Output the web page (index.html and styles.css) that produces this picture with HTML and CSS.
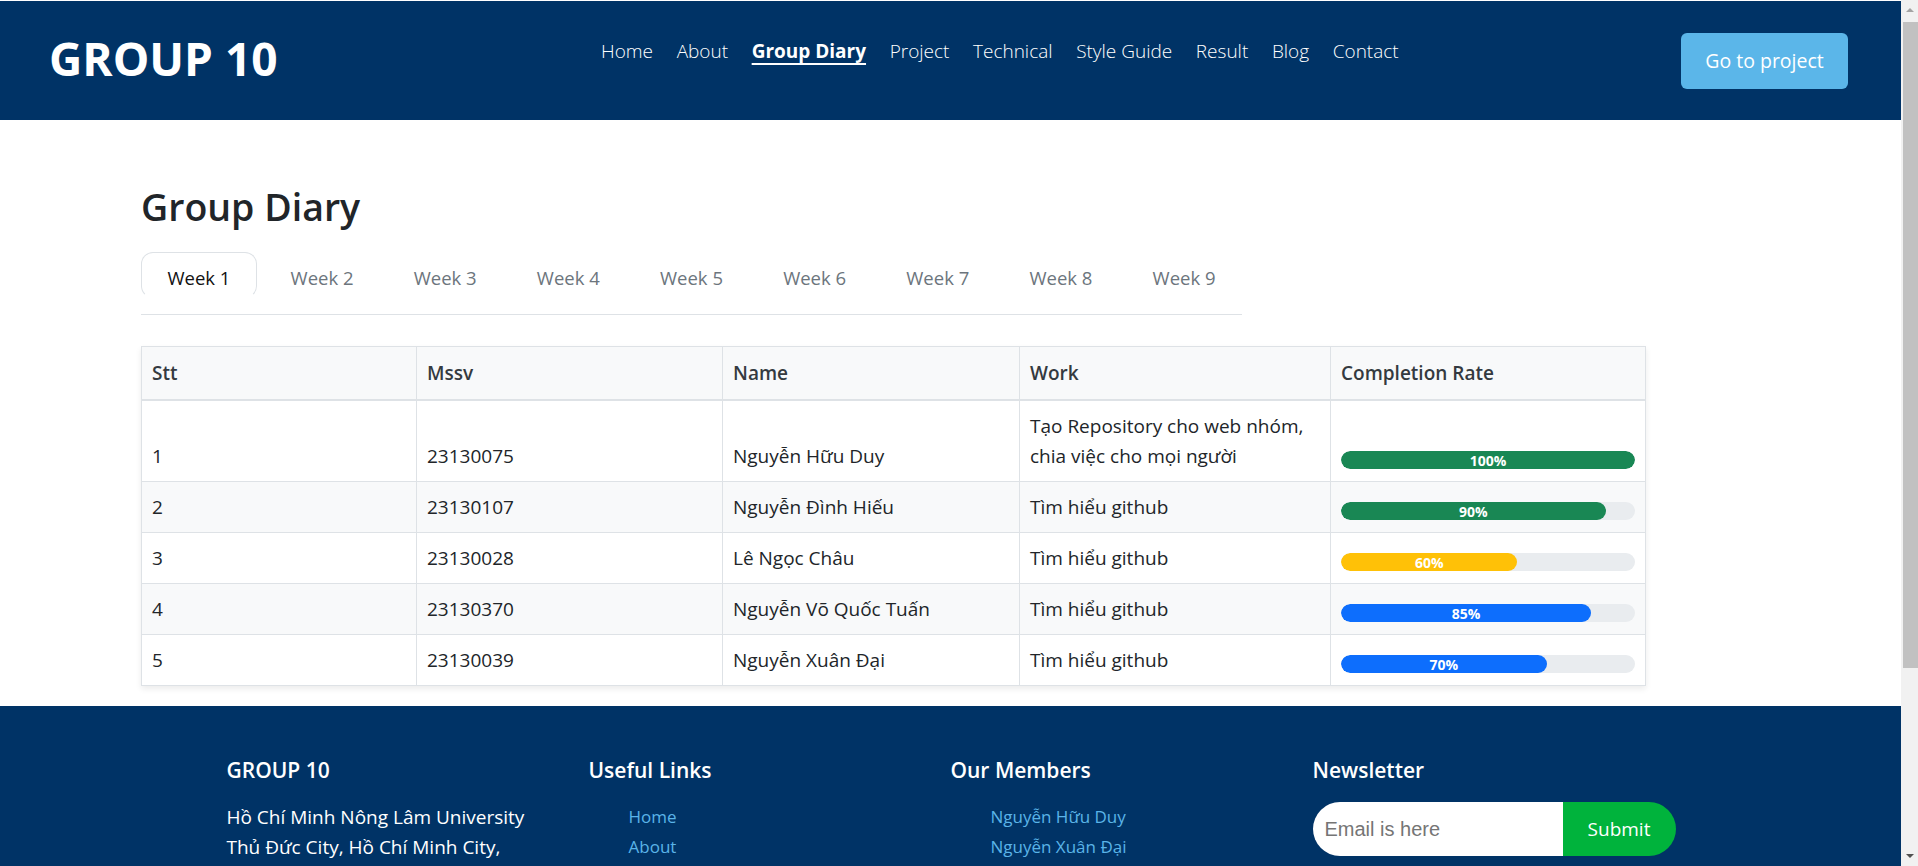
FILE: index.html
```html
<!DOCTYPE html>
<html lang="vi">
<head>
<meta charset="utf-8">
<title>Group Diary - GROUP 10</title>
<link rel="stylesheet" href="styles.css">
</head>
<body>
<header class="site-header">
  <a class="brand" href="#">GROUP 10</a>
  <nav class="main-nav">
    <a href="#">Home</a>
    <a href="#">About</a>
    <a href="#" class="active">Group Diary</a>
    <a href="#">Project</a>
    <a href="#">Technical</a>
    <a href="#">Style Guide</a>
    <a href="#">Result</a>
    <a href="#">Blog</a>
    <a href="#">Contact</a>
  </nav>
  <a class="cta" href="#">Go to project</a>
</header>

<main class="diary">
  <h1 class="diary-title">Group Diary</h1>
  <div class="tabs">
    <a class="tab active" href="#">Week 1</a>
    <a class="tab" href="#">Week 2</a>
    <a class="tab" href="#">Week 3</a>
    <a class="tab" href="#">Week 4</a>
    <a class="tab" href="#">Week 5</a>
    <a class="tab" href="#">Week 6</a>
    <a class="tab" href="#">Week 7</a>
    <a class="tab" href="#">Week 8</a>
    <a class="tab" href="#">Week 9</a>
  </div>

  <table class="diary-table">
    <colgroup>
      <col class="c-stt"><col class="c-mssv"><col class="c-name"><col class="c-work"><col class="c-rate">
    </colgroup>
    <thead>
      <tr><th>Stt</th><th>Mssv</th><th>Name</th><th>Work</th><th>Completion Rate</th></tr>
    </thead>
    <tbody>
      <tr>
        <td>1</td><td>23130075</td><td>Nguyễn Hữu Duy</td>
        <td>Tạo Repository cho web nhóm, chia việc cho mọi người</td>
        <td><div class="progress"><div class="bar bar-green" style="width:100%">100%</div></div></td>
      </tr>
      <tr>
        <td>2</td><td>23130107</td><td>Nguyễn Đình Hiếu</td>
        <td>Tìm hiểu github</td>
        <td><div class="progress"><div class="bar bar-green" style="width:90%">90%</div></div></td>
      </tr>
      <tr>
        <td>3</td><td>23130028</td><td>Lê Ngọc Châu</td>
        <td>Tìm hiểu github</td>
        <td><div class="progress"><div class="bar bar-yellow" style="width:60%">60%</div></div></td>
      </tr>
      <tr>
        <td>4</td><td>23130370</td><td>Nguyễn Võ Quốc Tuấn</td>
        <td>Tìm hiểu github</td>
        <td><div class="progress"><div class="bar bar-blue" style="width:85%">85%</div></div></td>
      </tr>
      <tr>
        <td>5</td><td>23130039</td><td>Nguyễn Xuân Đại</td>
        <td>Tìm hiểu github</td>
        <td><div class="progress"><div class="bar bar-blue" style="width:70%">70%</div></div></td>
      </tr>
    </tbody>
  </table>
</main>

<footer class="site-footer">
  <div class="footer-grid">
    <div class="f-col">
      <h3>GROUP 10</h3>
      <p>Hồ Chí Minh Nông Lâm University<br>Thủ Đức City, Hồ Chí Minh City,<br>Việt Nam</p>
      <p class="f-contact">Phone: +84 123 456 789<br>Email: group10@st.hcmuaf.edu.vn</p>
    </div>
    <div class="f-col">
      <h3>Useful Links</h3>
      <ul>
        <li><a href="#">Home</a></li>
        <li><a href="#">About</a></li>
        <li><a href="#">Group Diary</a></li>
        <li><a href="#">Project</a></li>
        <li><a href="#">Technical</a></li>
      </ul>
    </div>
    <div class="f-col">
      <h3>Our Members</h3>
      <ul>
        <li><a href="#">Nguyễn Hữu Duy</a></li>
        <li><a href="#">Nguyễn Xuân Đại</a></li>
        <li><a href="#">Nguyễn Đình Hiếu</a></li>
        <li><a href="#">Lê Ngọc Châu</a></li>
        <li><a href="#">Nguyễn Võ Quốc Tuấn</a></li>
      </ul>
    </div>
    <div class="f-col">
      <h3>Newsletter</h3>
      <form class="subscribe">
        <input type="email" placeholder="Email is here">
        <button type="button">Submit</button>
      </form>
    </div>
  </div>
  <div class="copyright">© Copyright GROUP 10. All Rights Reserved</div>
</footer>

<div class="scrollbar" aria-hidden="true">
  <div class="sb-btn"><span class="sb-up"></span></div>
  <div class="sb-thumb"></div>
  <div class="sb-track"></div>
  <div class="sb-btn"><span class="sb-down"></span></div>
</div>
</body>
</html>
```

FILE: styles.css
```css
* { box-sizing: border-box; }

html, body {
  margin: 0;
  padding: 0;
}

body {
  margin-right: 17px;
  font-family: "Open Sans", "Noto Sans", sans-serif;
  font-size: 19px;
  line-height: 30px;
  color: #212529;
  background: #fff;
}

a { text-decoration: none; }

/* ---------- Header ---------- */
.site-header {
  display: flex;
  align-items: center;
  height: 119px;
  margin-top: 1px;
  padding: 0 53px 0 49px;
  background: #003366;
}

.brand {
  flex: 0 0 552px;
  color: #fff;
  font-size: 46px;
  font-weight: 700;
  line-height: 56px;
  margin-top: -6px;
}

.main-nav {
  display: flex;
  gap: 23.6px;
  align-self: flex-start;
  margin-top: 35px;
}

.main-nav a {
  color: #fff;
  font-weight: 300;
  font-size: 19px;
  line-height: 30px;
}

.main-nav a.active {
  font-weight: 700;
  text-decoration: underline;
  text-decoration-thickness: 2px;
  text-underline-offset: 5px;
}

.cta {
  margin-left: auto;
  width: 167px;
  height: 56px;
  display: flex;
  align-items: center;
  justify-content: center;
  background: #5bb6e9;
  color: #fff;
  border-radius: 6px;
  font-size: 19.5px;
}

/* ---------- Main ---------- */
.diary {
  padding: 65px 0 20px 141px;
}

.diary-title {
  margin: 0 0 23px;
  font-size: 37.5px;
  font-weight: 600;
  line-height: 44px;
  color: #212529;
}

.tabs {
  display: flex;
  gap: 7.3px;
  width: 1101px;
  padding-bottom: 16px;
  border-bottom: 1px solid #dee2e6;
}

.tab {
  width: 116px;
  height: 46px;
  display: flex;
  align-items: center;
  justify-content: center;
  padding-top: 6px;
  color: #6c757d;
  font-size: 18.5px;
  border: 1px solid transparent;
  border-radius: 12px;
}

.tab.active {
  color: #111;
  border-color: #dee2e6 #dee2e6 transparent;
}

/* ---------- Table ---------- */
.diary-table {
  margin-top: 31px;
  width: 1504px;
  table-layout: fixed;
  border-collapse: collapse;
  border: 1px solid #dee2e6;
  box-shadow: 0 3px 6px rgba(0, 0, 0, 0.08);
}

.c-stt { width: 275px; }
.c-mssv { width: 306px; }
.c-name { width: 297px; }
.c-work { width: 311px; }
.c-rate { width: 315px; }

.diary-table th,
.diary-table td {
  padding: 10px 10px;
  border: 1px solid #dee2e6;
  text-align: left;
  vertical-align: bottom;
  line-height: 30px;
}

.diary-table th {
  background: #f8f9fa;
  font-weight: 600;
  color: #343a40;
  padding: 11px 10px;
  border-bottom: 2px solid #dee2e6;
}

.diary-table tbody tr:nth-child(even) td {
  background: #f8f9fa;
}

.progress {
  height: 18px;
  margin-bottom: 2px;
  background: #e9ecef;
  border-radius: 10px;
  overflow: hidden;
  display: flex;
}

.bar {
  height: 100%;
  border-radius: 10px;
  color: #fff;
  font-size: 14px;
  font-weight: 700;
  line-height: 19px;
  text-align: center;
}

.bar-green { background: #198754; }
.bar-yellow { background: #ffc107; }
.bar-blue { background: #0d6efd; }

/* ---------- Footer ---------- */
.site-footer {
  background: #003366;
  color: #fff;
  padding: 49px 0 30px;
}

.footer-grid {
  width: 1448px;
  margin: 0 auto;
  display: grid;
  grid-template-columns: repeat(4, 362px);
}

.f-col h3 {
  margin: 0 0 17px;
  font-size: 21px;
  font-weight: 600;
  line-height: 30px;
}

.f-col p {
  margin: 2px 0 0;
  font-size: 19px;
}

.f-col .f-contact { margin-top: 16px; }

.f-col ul {
  list-style: none;
  margin: 2px 0 0;
  padding-left: 40px;
}

.f-col li {
  font-size: 17px;
}

.f-col li a {
  color: #5ab4e8;
}

.subscribe {
  display: flex;
  width: 363px;
  height: 54px;
  margin: 0;
}

.subscribe input {
  flex: 1;
  min-width: 0;
  border: 0;
  outline: 0;
  border-radius: 27px 0 0 27px;
  padding: 0 12px;
  font-family: "Liberation Sans", Arial, sans-serif;
  font-size: 20px;
  color: #495057;
}

.subscribe input::placeholder { color: #757575; }

.subscribe button {
  width: 113px;
  border: 0;
  border-radius: 0 27px 27px 0;
  background: #00b33c;
  color: #fff;
  font-family: inherit;
  font-size: 19px;
}

.copyright {
  margin-top: 60px;
  text-align: center;
  font-size: 15px;
  color: #cfd8e3;
}

/* ---------- Browser scrollbar (drawn) ---------- */
.scrollbar {
  position: fixed;
  top: 0;
  right: 0;
  width: 17px;
  height: 100vh;
  background: #f1f1f1;
  display: flex;
  flex-direction: column;
}

.sb-btn {
  height: 20px;
  display: flex;
  align-items: center;
  justify-content: center;
}

.sb-up,
.sb-down {
  width: 0;
  height: 0;
  border-left: 4px solid transparent;
  border-right: 4px solid transparent;
}

.sb-up { border-bottom: 4px solid #a3a3a3; }
.sb-down { border-top: 4px solid #505050; }

.sb-thumb {
  height: 646px;
  margin: 2px 0 0 2px;
  background: #c1c1c1;
}

.sb-track { flex: 1; }
```
